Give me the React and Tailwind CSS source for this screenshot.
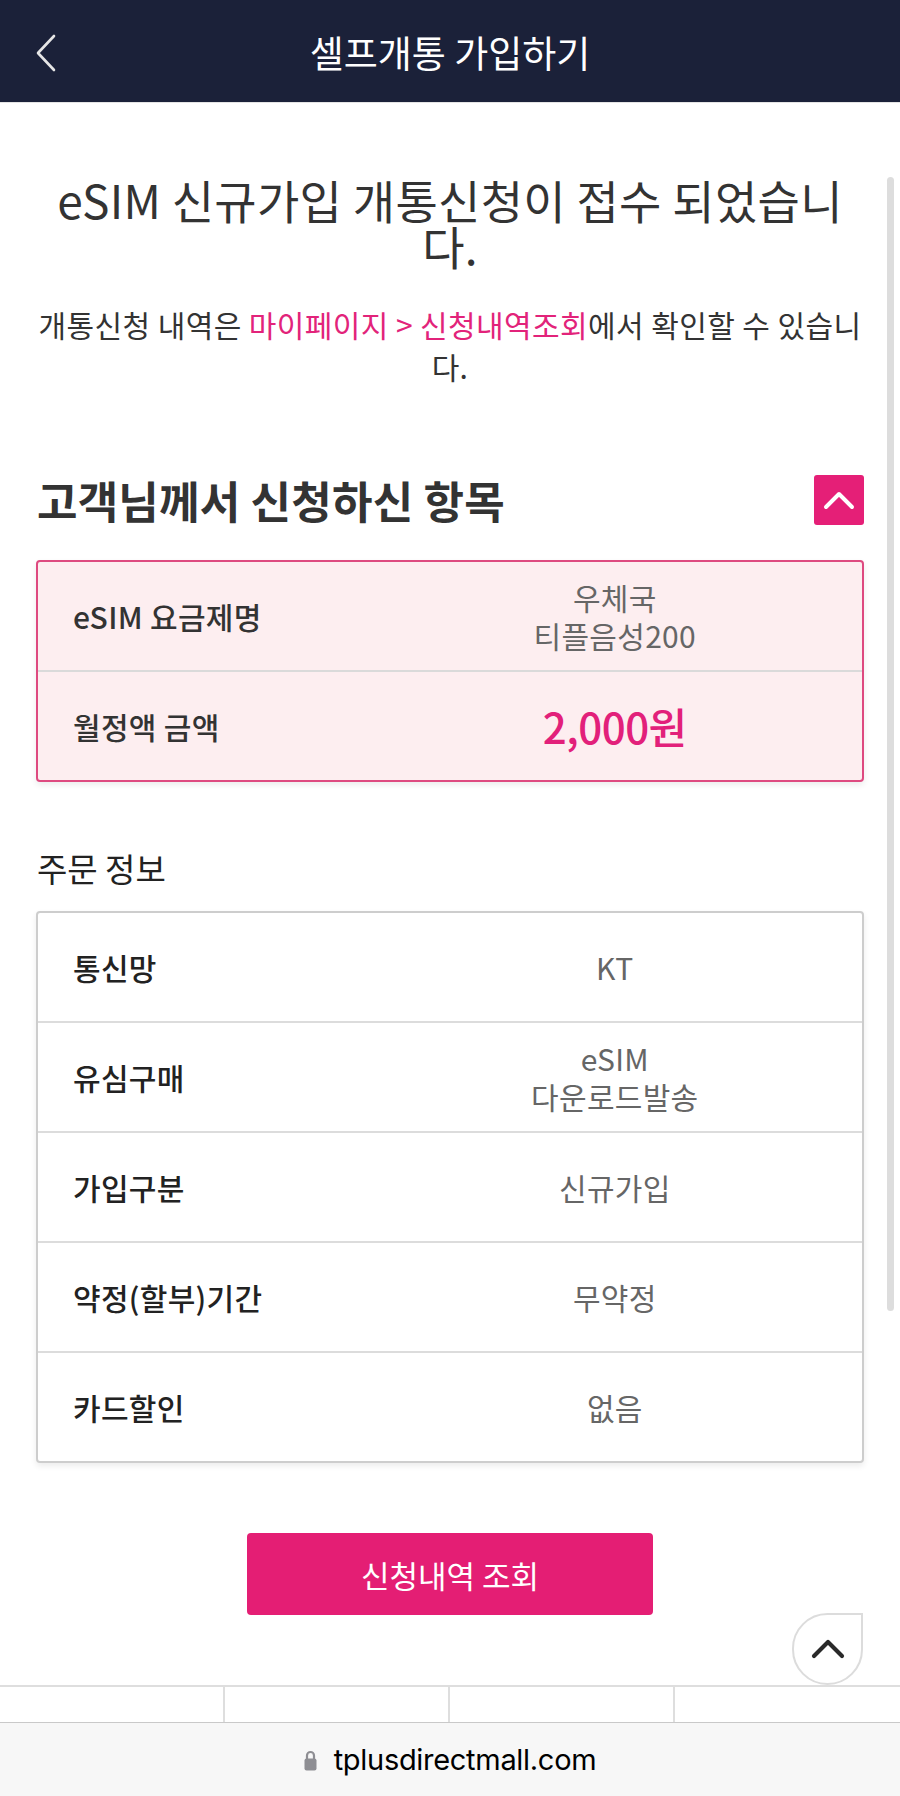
import React from "react";

function Row({ label, children, pink }) {
  return (
    <div className="box-content h-[108px] grid grid-cols-[2fr_3fr] items-center">
      <div className={pink ? "pl-[35px] text-[30px] tracking-[0.3px] font-medium text-[#333]" : "pl-[35px] text-[30px] tracking-[0.3px] font-medium text-[#222]"}>
        {label}
      </div>
      <div className="text-center">{children}</div>
    </div>
  );
}

function Val({ lines }) {
  return (
    <div className="flex flex-col items-center">
      {lines.map((l) => (
        <div key={l} className="h-[38px] text-[30px] leading-[38px] tracking-[0.3px] text-[#666]">
          {l}
        </div>
      ))}
    </div>
  );
}

export default function App() {
  return (
    <div className="relative w-[900px] h-[1796px] overflow-hidden bg-white flex flex-col font-['Noto_Sans_CJK_KR',sans-serif]">
      {/* Header */}
      <header className="relative h-[103px] shrink-0 bg-[#1b2139] flex items-center justify-center border-b border-[#e4e4e4]">
        <svg className="absolute left-[34px] top-[33px]" width="24" height="40" viewBox="0 0 24 40" fill="none">
          <path d="M20 3 L4 20 L20 37" stroke="#e6e6e6" strokeWidth="2.6" strokeLinecap="round" strokeLinejoin="round" />
        </svg>
        <h1 className="text-[37px] leading-none text-white pt-[2px]">셀프개통 가입하기</h1>
      </header>

      {/* Content */}
      <main className="flex-1 px-[36px] flex flex-col">
        <h2 className="pt-[73px] flex flex-col items-center text-center text-[46px] tracking-[0.3px] text-[#333]">
          <span className="block h-[46px] leading-[46px]">eSIM 신규가입 개통신청이 접수 되었습니</span>
          <span className="block h-[46px] leading-[46px]">다.</span>
        </h2>
        <p className="mt-[35px] flex flex-col items-center text-center text-[30px] tracking-[0.4px] text-[#333]">
          <span className="block h-[42px] leading-[42px]">
            개통신청 내역은 <span className="text-[#e2237a]">마이페이지 &gt; 신청내역조회</span>에서 확인할 수 있습니
          </span>
          <span className="block h-[42px] leading-[42px]">다.</span>
        </p>

        <div className="mt-[88px] h-[50px] flex items-center justify-between">
          <h3 className="text-[44px] leading-none font-bold text-[#333] pl-[1px] tracking-[0.2px]">고객님께서 신청하신 항목</h3>
          <button className="w-[50px] h-[50px] rounded-[3px] bg-[#e51f77] flex items-center justify-center">
            <svg width="32" height="20" viewBox="0 0 32 20" fill="none">
              <path d="M3 17 L16 4 L29 17" stroke="#fff" strokeWidth="4" strokeLinecap="round" strokeLinejoin="round" />
            </svg>
          </button>
        </div>

        <div className="mt-[35px] border-2 border-[#de4a80] rounded-[4px] bg-[#fdeef0] shadow-[0_3px_6px_rgba(0,0,0,0.08)] flex flex-col divide-y-2 divide-[#dadada]">
          <Row label="eSIM 요금제명" pink>
            <Val lines={["우체국", "티플음성200"]} />
          </Row>
          <Row label="월정액 금액" pink>
            <div className="text-[42px] leading-none font-medium text-[#e2207a] tracking-[-0.5px]">2,000원</div>
          </Row>
        </div>

        <div className="mt-[68px] text-[33px] leading-[36px] text-[#222] pl-[1px]">주문 정보</div>

        <div className="mt-[25px] border-2 border-[#cdcdcd] rounded-[4px] bg-white shadow-[0_3px_6px_rgba(0,0,0,0.08)] flex flex-col divide-y-2 divide-[#dcdcdc]">
          <Row label="통신망">
            <Val lines={["KT"]} />
          </Row>
          <Row label="유심구매">
            <Val lines={["eSIM", "다운로드발송"]} />
          </Row>
          <Row label="가입구분">
            <Val lines={["신규가입"]} />
          </Row>
          <Row label="약정(할부)기간">
            <Val lines={["무약정"]} />
          </Row>
          <Row label="카드할인">
            <Val lines={["없음"]} />
          </Row>
        </div>

        <button className="mt-[70px] mx-auto w-[406px] h-[82px] rounded-[4px] bg-[#e41e74] text-white text-[31px] leading-none">
          신청내역 조회
        </button>
      </main>

      {/* Bottom nav stub */}
      <nav className="h-[37px] shrink-0 border-t-2 border-[#dedede] grid grid-cols-4">
        <div className="border-r-2 border-[#dedede]" />
        <div className="border-r-2 border-[#dedede]" />
        <div className="border-r-2 border-[#dedede]" />
        <div />
      </nav>

      {/* Browser bar */}
      <div className="h-[74px] shrink-0 border-t border-[#c9c9c9] bg-[#f7f7f7] flex items-center justify-center">
        <svg width="13" height="22" viewBox="0 0 13 22" fill="none" className="mr-[17px]">
          <path d="M3 10 V6.5 A3.5 3.5 0 0 1 10 6.5 V10" stroke="#8e8e93" strokeWidth="2.2" fill="none" />
          <rect x="0.5" y="9.5" width="12" height="12" rx="2" fill="#8e8e93" />
        </svg>
        <span className="text-[29px] leading-none text-black font-['Inter',sans-serif] tracking-[-0.3px]">tplusdirectmall.com</span>
      </div>

      {/* Scrollbar */}
      <div className="absolute left-[887px] top-[177px] w-[7px] h-[1134px] rounded-full bg-[#dddddd]" />

      {/* Scroll-to-top */}
      <button className="absolute left-[792px] top-[1613px] w-[71px] h-[72px] rounded-full rounded-tr-none border-2 border-[#dcdcdc] bg-white flex items-center justify-center">
        <svg width="34" height="22" viewBox="0 0 34 22" fill="none">
          <path d="M3 18 L17 4 L31 18" stroke="#2a2a2a" strokeWidth="4.2" strokeLinecap="round" strokeLinejoin="round" />
        </svg>
      </button>
    </div>
  );
}
